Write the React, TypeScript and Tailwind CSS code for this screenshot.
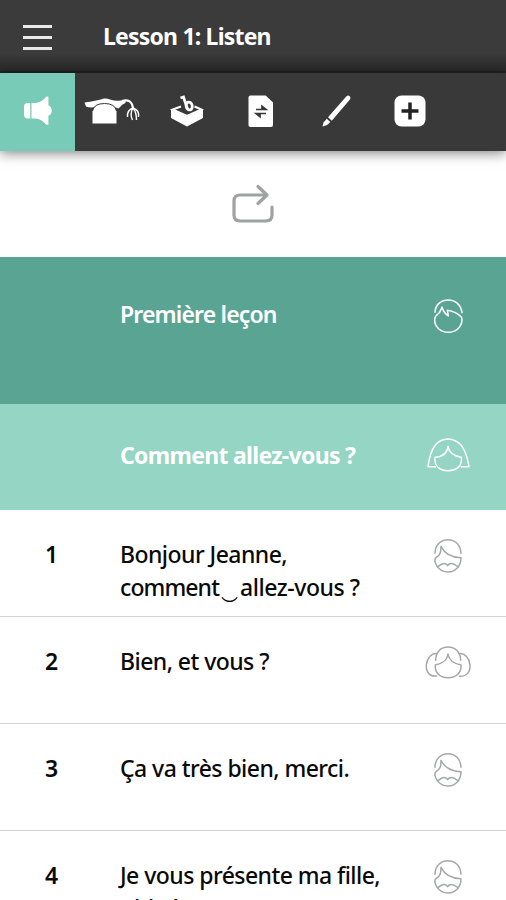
import React from 'react';

type Speaker = 'boy' | 'girl' | 'man' | 'woman';

interface LessonLine {
  id: number;
  lines: React.ReactNode[];
  speaker: Speaker;
}

const lessonLines: LessonLine[] = [
  {
    id: 1,
    lines: [
      'Bonjour Jeanne,',
      <>
        <span className="tracking-[-0.9px]">comment</span>
        <span className="inline-block w-[21px] scale-x-125 text-center leading-none tracking-normal">‿</span>
        <span className="tracking-[-0.450px]">allez-vous ?</span>
      </>
    ],
    speaker: 'man'
  },
  { id: 2, lines: ['Bien, et vous ?'], speaker: 'woman' },
  { id: 3, lines: ['Ça va très bien, merci.'], speaker: 'man' },
  { id: 4, lines: ['Je vous présente ma fille,', 'Chloé.'], speaker: 'man' }
];

function SpeakerIcon({ speaker }: { speaker: Speaker }) {
  return (
    <svg className="h-[60px] w-20 shrink-0" viewBox="0 0 240 180" fill="none" stroke="currentColor" strokeWidth={4.5} strokeLinecap="round" strokeLinejoin="round">
      {speaker === 'boy' && (
        <>
          <path d="M75 82C76 58 94 45 115 45s38 14 41 38" />
          <path d="M96 66c-4 9-5 16-12 21-7 5-10 9-10 17 0 22 18 38 41 38s40-16 41-38c0-4-1-8-4-10-10-9-22-15-40-18l3 17c-10-7-16-15-19-27z" />
        </>
      )}
      {speaker === 'girl' && (
        <>
          <path d="M76 125H54c3-24 8-45 20-62 10-14 24-21 40-21s31 8 42 22c12 17 17 37 21 61h-23" />
          <path d="M114 64c-2 20-18 31-39 33-3 24 12 40 39 40s43-15 40-40c-22-4-37-14-40-33z" />
        </>
      )}
      {speaker === 'man' && (
        <>
          <path d="M75 67c0-26 18-41 39-41s38 15 39 41" />
          <path d="M93 46c0 18-2 26-14 33-8 5-4 18 3 28 8 11 19 16 32 16 20 0 39-16 39-43-26-1-48-9-60-34z" />
          <path d="M82 107c6-1 9-8 17-9 6-1 11-1 14 6 4-7 9-7 15-6 8 1 10 8 17 9" />
        </>
      )}
      {speaker === 'woman' && (
        <>
          <path d="M77 73c0-25 16-40 37-40s38 15 38 40" />
          <path d="M81 53c-17-2-30 13-32 33-2 20 9 37 31 34M147 53c18-2 31 13 33 33 2 20-9 36-32 35" />
          <path d="M114 54c-2 20-19 29-38 33-2 23 13 38 38 38s41-15 39-38c-20-4-36-14-39-33z" />
        </>
      )}
    </svg>
  );
}

function MegaphoneIcon() {
  return (
    <svg className="h-8 w-8" viewBox="0 0 32 32" fill="#fff">
      <path d="M8.200 8v15.500H5.500c-2 0-3.500-1.300-3.500-3.500v-8.500C2 9.300 3.500 8 5.500 8z" />
      <path d="M9.500 8h3.500c4.500 0 8-2.300 11.500-6.500h1.900v8.800c2.200.7 3.300 2.700 3.300 5.200s-1.100 4.600-3.300 5.300v9H24.500c-3.500-4-7-6.300-11.500-6.300H9.500z" />
    </svg>
  );
}

function PhoneIcon() {
  return (
    <svg className="h-8 w-[58px]" viewBox="0 0 58 32" fill="none">
      <path d="M9.500 28.500V16q1.500-7.500 12-7.500T33.500 16v12.500z" fill="#fff" />
      <path d="M1.500 7.500Q13 6 21 3.500q3-.5 6 1 6 2 10.500 1l5 0v2.500l-3 1.500-4 4-7-2.500q-9-4-16 .5-4 2-9.500 0z" fill="#fff" />
      <path d="M9.500 16q1.500-7.500 12-7.500T33.500 16" stroke="#373737" strokeWidth="1" />
      <path d="M39 6c6-2 10.500.5 11 8" stroke="#fff" strokeWidth="2.200" />
      <path d="M50 13q-6 2-5.500 9M50 13q-3.500 6-.500 12M50 13q3.500 4 3.500 12M50 13q6.500 2 5.500 9" stroke="#fff" strokeWidth="1.400" />
    </svg>
  );
}

function BoxIcon() {
  return (
    <svg className="h-8 w-9" viewBox="0 0 36 32" fill="none">
      <path d="M2 14.500 18 21.500l16-7V23L18 31.500 2 23z" fill="#fff" />
      <path d="m12 11.500-8.500 3L18 21l14.500-6.500-7-3" stroke="#fff" strokeWidth="2" />
      <path d="m11.500 3 3-1 4 12" stroke="#fff" strokeWidth="2.800" />
      <ellipse cx="20.200" cy="11" rx="3" ry="4" transform="rotate(-15 20.200 11)" stroke="#fff" strokeWidth="2.800" />
    </svg>
  );
}

function SwapPageIcon() {
  return (
    <svg className="h-8 w-[26px]" viewBox="0 0 26 32">
      <path d="M2.500.5h15.200l7.300 7V30q0 2-2 2H2.500q-2 0-2-2V2.500q0-2 2-2z" fill="#fff" />
      <path d="M8 14.500h10l-4-3.200v3.200M18 18.500H8l4 3.200v-3.200" fill="#373737" stroke="#373737" strokeWidth="1.700" />
    </svg>
  );
}

function PencilIcon() {
  return (
    <svg className="h-8 w-[30px]" viewBox="0 0 30 32" fill="#fff">
      <path d="M25.500 1.300q1.700-1.500 3.200 0t0 3.500L10.800 25.800 7 22.200z" />
      <path d="m5.800 23.800 3.500 3.200-3.100 3-4.700 1.500 1-4z" />
    </svg>
  );
}

function PlusIcon() {
  return (
    <svg className="h-8 w-8" viewBox="0 0 32 32">
      <rect x=".5" y=".5" width="31" height="31" rx="7" fill="#fff" />
      <path d="M16 7.500v17M7.500 16h17" stroke="#222" strokeWidth="3.500" />
    </svg>
  );
}

const tools = [MegaphoneIcon, PhoneIcon, BoxIcon, SwapPageIcon, PencilIcon, PlusIcon];

export default function App() {
  return (
    <div className="flex h-[900px] w-full flex-col overflow-hidden bg-white font-['Noto_Sans','DejaVu_Sans',sans-serif] text-[#0a0a0a] [font-stretch:87.5%]">

      {/* Header */}
      <header className="flex h-[73px] shrink-0 items-center border-b-2 border-[#222] bg-linear-to-b from-[#3b3b3b] from-75% to-[#292929] pl-[23px]">
        <button aria-label="Menu" className="flex w-[29px] flex-col gap-2 pt-[3px]">
          <span className="h-[3px] bg-[#e8e8e8]" />
          <span className="h-[3px] bg-[#e8e8e8]" />
          <span className="h-[3px] bg-[#e8e8e8]" />
        </button>
        <h1 className="ml-[51px] pt-0.5 text-[23px] font-bold tracking-[-0.8px] whitespace-nowrap text-white">Lesson 1: Listen</h1>
      </header>

      {/* Tools */}
      <nav className="z-10 flex h-[78px] shrink-0 bg-[#393939] shadow-[0_2px_12px_rgba(0,0,0,0.5)]">
        {tools.map((Icon, index) => (
          <button
            key={index}
            className={`flex shrink-0 items-center justify-center pb-0.5 ${index === 0 ? 'w-[75px] bg-[#78cbb6]' : 'w-[74.500px]'}`}
          >
            <Icon />
          </button>
        ))}
      </nav>

      {/* Repeat */}
      <div className="flex h-[106px] shrink-0 items-center justify-center">
        <svg className="h-10 w-[42px]" viewBox="0 0 42 40" fill="none" stroke="#9fa2a1" strokeWidth="3.200" strokeLinecap="round" strokeLinejoin="round">
          <path d="M34 11H8q-6 0-6 6v14q0 6 6 6h26q6 0 6-6v-8M26 2.500l9 8.500-9 8.500" />
        </svg>
      </div>

      {/* Lesson titles */}
      <section className="flex h-[147px] shrink-0 bg-[#5aa494] pr-4 text-white">
        <h2 className="flex-1 pt-[41px] pl-[120px] text-[23px] leading-[33px] font-semibold tracking-[-0.85px]">Première leçon</h2>
        <div className="pt-7"><SpeakerIcon speaker="boy" /></div>
      </section>
      <section className="flex h-[106px] shrink-0 bg-[#94d5c3] pr-4 text-white">
        <h2 className="flex-1 pt-[35px] pl-[120px] text-[23px] leading-[33px] font-bold tracking-[-0.7px]">Comment allez-vous ?</h2>
        <div className="pt-[21px]"><SpeakerIcon speaker="girl" /></div>
      </section>

      {/* Dialogue */}
      {lessonLines.map((line) => (
        <article key={line.id} className="flex h-[107px] shrink-0 border-b border-[#d3d3d3] pr-4">
          <span className="w-[120px] pt-7 pl-[45px] text-[23px] leading-[33px] font-semibold">{line.id}</span>
          <p className="flex-1 pt-7 text-[23px] leading-[33px] font-medium tracking-[-0.55px] whitespace-nowrap">
            {line.lines.map((text, index) => (
              <span key={index} className="block h-[33px]">{text}</span>
            ))}
          </p>
          <div className={`text-[#a5a8a7] ${line.speaker === 'woman' ? 'pt-[19px]' : 'pt-[21px]'}`}>
            <SpeakerIcon speaker={line.speaker} />
          </div>
        </article>
      ))}

    </div>
  );
}
